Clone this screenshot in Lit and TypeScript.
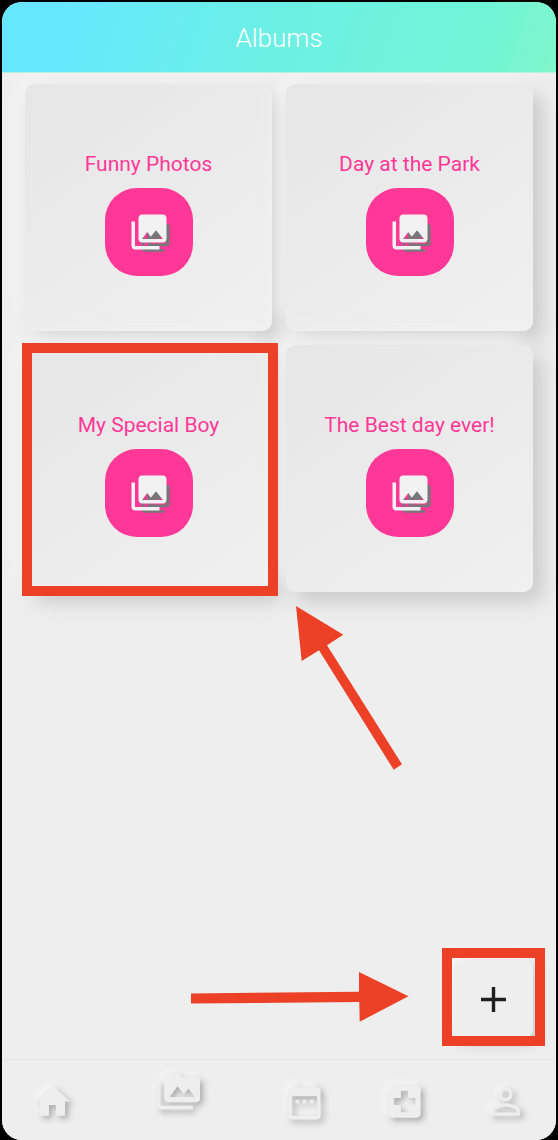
import { LitElement, html, css, svg, nothing } from "lit";
import { customElement, property } from "lit/decorators.js";

const ICONS: Record<string, string> = {
  collections:
    "M22 16V4c0-1.1-.9-2-2-2H8c-1.1 0-2 .9-2 2v12c0 1.1.9 2 2 2h12c1.1 0 2-.9 2-2zm-11-4l2.03 2.71L16 11l4 5H8l3-4zM2 6v14c0 1.1.9 2 2 2h14v-2H4V6H2z",
  home: "M10 20v-6h4v6h5v-8h3L12 3 2 12h3v8z",
  media:
    "M2 6H0v5h.01L0 20c0 1.1.9 2 2 2h18v-2H2V6zm20-2h-8l-2-2H6c-1.1 0-1.99.9-1.99 2L4 16c0 1.1.9 2 2 2h16c1.1 0 2-.9 2-2V6c0-1.1-.9-2-2-2zM7 15l4.5-6 3.5 4.51 2.5-3.01L21 15H7z",
  calendar:
    "M9 11H7v2h2v-2zm4 0h-2v2h2v-2zm4 0h-2v2h2v-2zm2-7h-1V2h-2v2H8V2H6v2H5c-1.11 0-1.99.9-1.99 2L3 20c0 1.1.89 2 2 2h14c1.1 0 2-.9 2-2V6c0-1.1-.9-2-2-2zm0 16H5V9h14v11z",
  health:
    "M19 3H5c-1.1 0-1.99.9-1.99 2L3 19c0 1.1.9 2 2 2h14c1.1 0 2-.9 2-2V5c0-1.1-.9-2-2-2zm-1 11h-4v4h-4v-4H6v-4h4V6h4v4h4v4z",
  profile:
    "M12 5.9c1.16 0 2.1.94 2.1 2.1s-.94 2.1-2.1 2.1S9.9 9.16 9.9 8s.94-2.1 2.1-2.1m0 9c2.97 0 6.1 1.46 6.1 2.1v1.1H5.9V17c0-.64 3.13-2.1 6.1-2.1M12 4C9.79 4 8 5.79 8 8s1.79 4 4 4 4-1.79 4-4-1.79-4-4-4zm0 9c-2.67 0-8 1.34-8 4v3h16v-3c0-2.66-5.33-4-8-4z",
};

@customElement("album-card")
export class AlbumCard extends LitElement {
  @property() name = "";

  static styles = css`
    :host {
      display: flex;
      flex-direction: column;
      align-items: center;
      justify-content: center;
      gap: 12px;
      box-sizing: border-box;
      aspect-ratio: 1;
      padding-top: 12px;
      border-radius: 10px;
      background: linear-gradient(145deg, #e6e6e6, #f0f0f0);
      box-shadow: 10px 10px 20px #cacaca, -10px -10px 20px #f4f4f4;
    }
    .title {
      margin: 0;
      font-size: 21px;
      line-height: 24px;
      font-weight: 400;
      color: #ff3898;
    }
    .open {
      display: grid;
      place-items: center;
      width: 88px;
      height: 88px;
      padding: 0;
      border: 0;
      border-radius: 32px;
      background: #ff3898;
      cursor: pointer;
    }
    .icon {
      width: 42px;
      height: 42px;
      overflow: visible;
    }
    .shade {
      fill: #777;
    }
    .front {
      fill: #f2f2f2;
    }
  `;

  render() {
    return html`
      <h2 class="title">${this.name}</h2>
      <button class="open" aria-label="Open ${this.name}">
        <svg class="icon" viewBox="0 0 24 24" aria-hidden="true">
          <path class="shade" transform="translate(6.2 5.7) scale(.8)" d=${ICONS.collections} />
          <path class="front" d=${ICONS.collections} />
        </svg>
      </button>
    `;
  }
}

@customElement("app-root")
export class AppRoot extends LitElement {
  private albums = [
    { name: "Funny Photos" },
    { name: "Day at the Park" },
    { name: "My Special Boy", marked: true },
    { name: "The Best day ever!" },
  ];

  private tabs = [
    { icon: "home", label: "Home" },
    { icon: "media", label: "Albums", active: true },
    { icon: "calendar", label: "Calendar" },
    { icon: "health", label: "Health" },
    { icon: "profile", label: "Profile" },
  ];

  static styles = css`
    :host {
      display: flex;
      box-sizing: border-box;
      min-height: 100vh;
      padding: 2px 2px 0;
      background: #000;
      font-family: Roboto, "Liberation Sans", sans-serif;
    }
    .screen {
      flex: 1;
      min-width: 0;
      display: flex;
      flex-direction: column;
      overflow: hidden;
      border-radius: 20px;
      background: #eee;
    }
    .header {
      position: relative;
      z-index: 2;
      display: flex;
      align-items: center;
      justify-content: center;
      box-sizing: border-box;
      height: 71px;
      padding-top: 2px;
      border-bottom: 1px solid #b4f3ea;
      background: linear-gradient(108deg, #67e7ff 10%, #6cf0e4 50%, #70f4d6 85%, #80f6cb);
    }
    .heading {
      margin: 0;
      font-size: 26px;
      line-height: 32px;
      font-weight: 300;
      color: #fff;
    }
    .content {
      flex: 1;
      display: flex;
      flex-direction: column;
      justify-content: space-between;
      padding: 11px 23px 20px;
    }
    .albums {
      display: grid;
      grid-template-columns: 1fr 1fr;
      gap: 14px;
      margin: 0;
      padding: 0;
      list-style: none;
    }
    .album {
      position: relative;
    }
    .outline {
      position: absolute;
      z-index: 1;
      border: 10px solid #ec4126;
      pointer-events: none;
    }
    .outline-album {
      inset: -2px -6px -4px -3px;
    }
    .outline-add {
      inset: -11px -12px -7px -11px;
    }
    .arrow {
      position: absolute;
      z-index: 1;
      fill: #ec4126;
      pointer-events: none;
    }
    .arrow-album {
      left: calc(100% + 24px);
      top: calc(100% + 14px);
    }
    .arrow-add {
      right: calc(100% + 44px);
      top: 13px;
    }
    .add-wrap {
      position: relative;
      align-self: flex-end;
    }
    .add {
      display: grid;
      place-items: center;
      width: 80px;
      height: 80px;
      padding: 0;
      border: 0;
      border-radius: 10px;
      background: #eee;
      box-shadow: 6px 6px 12px #cfcfcf, -6px -6px 12px #fafafa;
      cursor: pointer;
    }
    .plus {
      fill: #1f1f1f;
    }
    .nav {
      display: flex;
      box-sizing: border-box;
      height: 81px;
      padding-top: 2px;
      border-top: 1px solid #e6e6e6;
      background: #eee;
    }
    .tab {
      flex: 1;
      display: flex;
      align-items: center;
      justify-content: center;
    }
    .tab-active {
      flex: 1.5;
      padding-bottom: 20px;
    }
    .tab-icon {
      width: 43px;
      height: 43px;
      overflow: visible;
      fill: #eee;
      filter: drop-shadow(3px 3px 3px rgba(0, 0, 0, 0.3)) drop-shadow(-2px -2px 3px #fafafa);
    }
  `;

  private albumArrow() {
    return svg`<svg class="arrow arrow-album" width="107" height="164" viewBox="0 0 107 164" aria-hidden="true">
      <path d="M0 0L47.3 28.7 31 39.3 106 158.3 97.7 163.7 23 44.3 5.7 55z" />
    </svg>`;
  }

  private addArrow() {
    return svg`<svg class="arrow arrow-add" width="218" height="50" viewBox="0 0 218 50" aria-hidden="true">
      <path d="M0 21.5L168 19.7V0L217.5 24.3 168.7 49.7 168.3 30 0 31.5z" />
    </svg>`;
  }

  render() {
    return html`
      <div class="screen">
        <header class="header"><h1 class="heading">Albums</h1></header>
        <main class="content">
          <ul class="albums">
            ${this.albums.map(
              (a) => html`<li class="album">
                <album-card .name=${a.name}></album-card>
                ${a.marked
                  ? html`<div class="outline outline-album"></div>${this.albumArrow()}`
                  : nothing}
              </li>`
            )}
          </ul>
          <div class="add-wrap">
            <button class="add" aria-label="Add album">
              <svg class="plus" width="25" height="25" viewBox="0 0 25 25" aria-hidden="true">
                <path d="M10.8 0h3.4v10.8H25v3.4H14.2V25h-3.4V14.2H0v-3.4h10.8z" />
              </svg>
            </button>
            <div class="outline outline-add"></div>
            ${this.addArrow()}
          </div>
        </main>
        <nav class="nav">
          ${this.tabs.map(
            (t) => html`<a class="tab ${t.active ? "tab-active" : ""}" href="#${t.icon}" aria-label=${t.label}>
              <svg class="tab-icon" viewBox="0 0 24 24" aria-hidden="true"><path d=${ICONS[t.icon]} /></svg>
            </a>`
          )}
        </nav>
      </div>
    `;
  }
}
